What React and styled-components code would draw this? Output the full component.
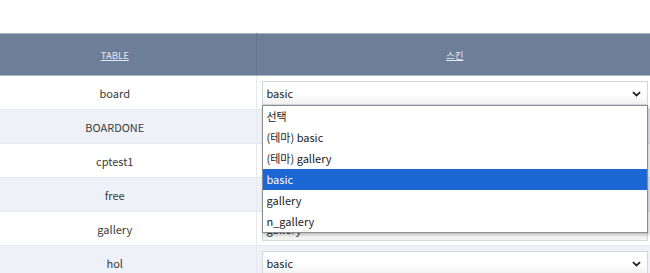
import React from "react";
import styled, { createGlobalStyle } from "styled-components";

const GlobalStyle = createGlobalStyle`
  body {
    margin: 0;
    background: #fff;
    font-family: "Noto Sans CJK KR", "Noto Sans", sans-serif;
  }
`;

// the open list hides the selects of the next rows
const rows = [
  { name: "board", skin: "basic", open: true },
  { name: "BOARDONE", skin: "basic", covered: true },
  { name: "cptest1", skin: "basic", covered: true },
  { name: "free", skin: "basic", covered: true },
  { name: "gallery", skin: "gallery" },
  { name: "hol", skin: "basic" },
];

const options = ["선택", "(테마) basic", "(테마) gallery", "basic", "gallery", "n_gallery"];

const App = () => {
  return (
    <Page>
      <GlobalStyle />
      <Table>
        <thead>
          <tr>
            <HeadCell $width={282}>
              <a href="#table">TABLE</a>
            </HeadCell>
            <HeadCell>
              <a href="#skin">스킨</a>
            </HeadCell>
          </tr>
        </thead>
        <tbody>
          {rows.map((row, i) => (
            <Row key={row.name} $alt={i % 2 === 1}>
              <NameCell>{row.name}</NameCell>
              <SkinCell>
                <SelectBox $covered={row.covered}>
                  <span>{row.skin}</span>
                  <Chevron viewBox="0 0 10 6">
                    <path d="M1 1l4 3.6L9 1" />
                  </Chevron>
                  {row.open && (
                    <OptionList>
                      {options.map((opt) => (
                        <Option key={opt} $active={opt === "basic"}>
                          {opt}
                        </Option>
                      ))}
                    </OptionList>
                  )}
                </SelectBox>
              </SkinCell>
            </Row>
          ))}
        </tbody>
      </Table>
    </Page>
  );
};

const Page = styled.div`
  padding-top: 33px;
  width: 650px;
  height: 273px;
  overflow: hidden;
  box-sizing: border-box;
`;

const Table = styled.table`
  width: 680px;
  margin-left: -26px;
  border-collapse: collapse;
  table-layout: fixed;
`;

const HeadCell = styled.th`
  width: ${(p) => (p.$width ? `${p.$width}px` : "auto")};
  height: 42px;
  padding: 0;
  background: #6d7e98;
  border-top: 1px solid #a9b3c3;
  border-bottom: 1px solid #a9b3c3;
  border-right: 1px solid #65758e;
  font-size: 9.5px;
  font-weight: normal;
  text-align: center;
  box-sizing: border-box;
  a {
    color: #e4e8f0;
    text-decoration: underline;
  }
`;

const Row = styled.tr`
  background: ${(p) => (p.$alt ? "#eef1f8" : "#fff")};
  border-bottom: 1px solid #e3e7ee;
`;

const NameCell = styled.td`
  height: 33px;
  padding: 0;
  text-align: center;
  font-size: 11px;
  color: #3a3a3a;
  border-right: 1px solid #e6e9ef;
`;

const SkinCell = styled.td`
  padding: 0 6px 0 5px;
  vertical-align: middle;
`;

const SelectBox = styled.div`
  position: relative;
  height: 24px;
  display: flex;
  align-items: center;
  padding: 0 4px;
  border: 1px solid #d3d6dc;
  background: linear-gradient(#fff 55%, #f1f1f1);
  font-size: 11px;
  color: #222;
  box-sizing: border-box;
  & > span,
  & > svg {
    visibility: ${(p) => (p.$covered ? "hidden" : "visible")};
  }
`;

const Chevron = styled.svg`
  position: absolute;
  right: 6px;
  top: 9px;
  width: 9px;
  height: 6px;
  fill: none;
  stroke: #222;
  stroke-width: 2;
`;

const OptionList = styled.ul`
  position: absolute;
  left: -1px;
  right: -1px;
  top: 23px;
  margin: 0;
  padding: 0;
  list-style: none;
  background: #fff;
  border: 1px solid #8c8c8c;
  box-shadow: 1px 2px 3px rgba(0, 0, 0, 0.25);
  z-index: 2;
`;

const Option = styled.li`
  height: 21px;
  line-height: 21px;
  padding: 0 4px;
  font-size: 11px;
  color: ${(p) => (p.$active ? "#fff" : "#222")};
  background: ${(p) => (p.$active ? "#1b67d3" : "transparent")};
`;

export default App;
